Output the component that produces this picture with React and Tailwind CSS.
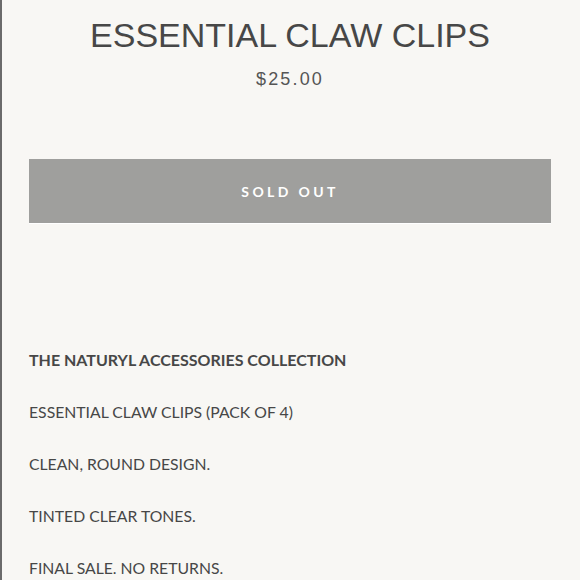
export default function App() {
    const lines = [
        'ESSENTIAL CLAW CLIPS (PACK OF 4)',
        'CLEAN, ROUND DESIGN.',
        'TINTED CLEAR TONES.',
        'FINAL SALE. NO RETURNS.',
    ]

    return (
        <div className="w-[580px] h-[580px] overflow-hidden bg-[#f8f7f4] border-l-2 border-[#6b6b6b]">
            <div className="pl-[27px] pr-[29px]">
                <h1 className="pt-[15px] text-center text-[34px] leading-[40px] text-[#474747] font-['Liberation_Sans',Arial,sans-serif]">
                    ESSENTIAL CLAW CLIPS
                </h1>
                <p className="mt-[13px] text-center text-[18px] leading-[22px] tracking-[0.12em] text-[#555] font-['Liberation_Sans',Arial,sans-serif]">
                    $25.00
                </p>

                <button className="mt-[69px] w-full h-[65px] bg-[#9f9f9d] border-b border-white text-white text-[14px] font-bold tracking-[0.24em] font-['Lato',sans-serif]">
                    SOLD OUT
                </button>

                <div className="mt-[110px] font-['Lato',sans-serif] text-[#474747]">
                    <p className="text-[16px] leading-[52px] font-bold">THE NATURYL ACCESSORIES COLLECTION</p>
                    {lines.map(line => (
                        <p key={line} className="text-[15.75px] leading-[52px]">{line}</p>
                    ))}
                </div>
            </div>
        </div>
    )
}
